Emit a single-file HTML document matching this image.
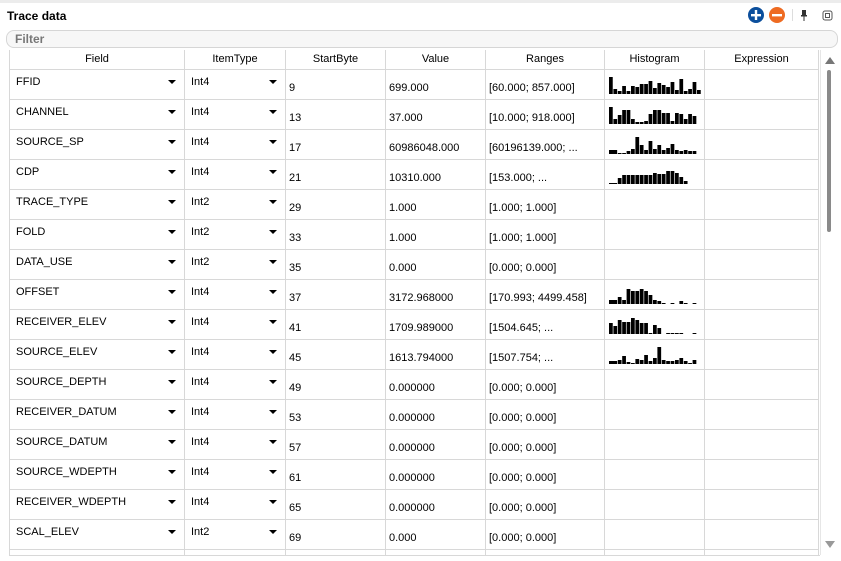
<!DOCTYPE html>
<html><head><meta charset="utf-8">
<style>
*{box-sizing:border-box;margin:0;padding:0}
body{width:841px;height:561px;background:#fff;font-family:"Liberation Sans",sans-serif;font-size:11px;color:#000;position:relative;overflow:hidden}
.top{position:absolute;left:0;top:0;width:841px;height:3px;background:#ececec}
.title{position:absolute;left:7px;top:9px;font-weight:bold;font-size:12px}
.filter{position:absolute;left:6px;top:30px;width:832px;height:18px;border:1px solid #d6d6d6;border-radius:8px;background:#f7f7f7;color:#777;font-weight:bold;font-size:12px;padding-left:8px;line-height:17px}
.wrap{position:absolute;left:9px;top:50px;width:811px;height:506px;overflow:hidden;border-bottom:1px solid #d8d8d8}
table{border-collapse:collapse;table-layout:fixed}
td,th{border:1px solid #d8d8d8;height:30px;padding:0;vertical-align:top;position:relative;white-space:nowrap;overflow:hidden}
th{height:19px;font-weight:normal;text-align:center;vertical-align:middle;border-top:none;font-size:11px}
td span{position:absolute;left:6px;top:10px}
td.f span{top:6px}
td.v span{left:3px;top:12px}
.ar{position:absolute;right:8px;top:10px;width:0;height:0;border-left:4px solid transparent;border-right:4px solid transparent;border-top:4px solid #000}
svg.h{position:absolute;left:4px;top:4px}
.sb{position:absolute;left:820px;top:50px;width:18px;height:505px;background:#fff;border-left:1px solid #e6e6e6}
.thumb{position:absolute;left:827px;top:70px;width:4px;height:162px;background:#8a8a8a;border-radius:2px}
</style></head><body>
<div class="top"></div>
<div class="title">Trace data</div>
<svg style="position:absolute;left:745px;top:5px" width="96" height="20">
<circle cx="11" cy="10" r="8" fill="#0c4f9c"/><rect x="6" y="9" width="10" height="2.4" fill="#fff"/><rect x="9.8" y="5" width="2.4" height="10" fill="#fff"/>
<circle cx="32" cy="10" r="8" fill="#ee6b22"/><rect x="27" y="9" width="10" height="2.4" fill="#fff"/>
<rect x="47" y="4" width="1" height="12" fill="#ddd"/>
<rect x="57" y="5" width="4" height="6" fill="#333"/><rect x="56" y="10" width="6" height="1.5" fill="#333"/><rect x="58.5" y="11" width="1" height="5" fill="#333"/>
<rect x="78" y="6" width="9" height="9" rx="2" fill="none" stroke="#555"/><rect x="80.5" y="8.5" width="4" height="4" fill="none" stroke="#555"/>
</svg>
<div class="filter">Filter</div>
<div class="sb"><svg width="18" height="505"><path d="M4 14 L9 7 L14 14Z" fill="#777"/><path d="M4 491 L9 498 L14 491Z" fill="#999"/></svg></div>
<div class="thumb"></div>
<div class="wrap">
<table>
<colgroup><col style="width:175px"><col style="width:101px"><col style="width:100px"><col style="width:100px"><col style="width:119px"><col style="width:100px"><col style="width:114px"></colgroup>
<tr><th>Field</th><th>ItemType</th><th>StartByte</th><th>Value</th><th>Ranges</th><th>Histogram</th><th>Expression</th></tr>
<tr><td class="f"><span>FFID</span><i class="ar"></i></td><td class="f"><span>Int4</span><i class="ar"></i></td><td class="v"><span>9</span></td><td class="v"><span>699.000</span></td><td class="v"><span>[60.000; 857.000]</span></td><td><svg class="h" width="92" height="20"><g fill="#000" transform="translate(0,20) scale(1.1,-1)"><rect x="0" width="3.4" height="17"/><rect x="4" width="3.4" height="5"/><rect x="8" width="3.4" height="3"/><rect x="12" width="3.4" height="8"/><rect x="16" width="3.4" height="3"/><rect x="20" width="3.4" height="8"/><rect x="24" width="3.4" height="7"/><rect x="28" width="3.4" height="10"/><rect x="32" width="3.4" height="10"/><rect x="36" width="3.4" height="13"/><rect x="40" width="3.4" height="6"/><rect x="44" width="3.4" height="11"/><rect x="48" width="3.4" height="9"/><rect x="52" width="3.4" height="7"/><rect x="56" width="3.4" height="12"/><rect x="60" width="3.4" height="4"/><rect x="64" width="3.4" height="15"/><rect x="68" width="3.4" height="3"/><rect x="72" width="3.4" height="5"/><rect x="76" width="3.4" height="12"/><rect x="80" width="3.4" height="4"/></g></svg></td><td></td></tr>
<tr><td class="f"><span>CHANNEL</span><i class="ar"></i></td><td class="f"><span>Int4</span><i class="ar"></i></td><td class="v"><span>13</span></td><td class="v"><span>37.000</span></td><td class="v"><span>[10.000; 918.000]</span></td><td><svg class="h" width="92" height="20"><g fill="#000" transform="translate(0,20) scale(1.1,-1)"><rect x="0" width="3.4" height="17"/><rect x="4" width="3.4" height="5"/><rect x="8" width="3.4" height="9"/><rect x="12" width="3.4" height="14"/><rect x="16" width="3.4" height="14"/><rect x="20" width="3.4" height="5"/><rect x="24" width="3.4" height="2"/><rect x="28" width="3.4" height="2"/><rect x="32" width="3.4" height="3"/><rect x="36" width="3.4" height="10"/><rect x="40" width="3.4" height="14"/><rect x="44" width="3.4" height="14"/><rect x="48" width="3.4" height="11"/><rect x="52" width="3.4" height="11"/><rect x="56" width="3.4" height="3"/><rect x="60" width="3.4" height="11"/><rect x="64" width="3.4" height="10"/><rect x="68" width="3.4" height="5"/><rect x="72" width="3.4" height="10"/><rect x="76" width="3.4" height="8"/></g></svg></td><td></td></tr>
<tr><td class="f"><span>SOURCE_SP</span><i class="ar"></i></td><td class="f"><span>Int4</span><i class="ar"></i></td><td class="v"><span>17</span></td><td class="v"><span>60986048.000</span></td><td class="v"><span>[60196139.000; ...</span></td><td><svg class="h" width="92" height="20"><g fill="#000" transform="translate(0,20) scale(1.1,-1)"><rect x="0" width="7.4" height="4"/><rect x="8" width="3.4" height="1"/><rect x="12" width="3.4" height="1"/><rect x="16" width="3.4" height="3"/><rect x="20" width="3.4" height="5"/><rect x="24" width="3.4" height="17"/><rect x="28" width="3.4" height="9"/><rect x="32" width="3.4" height="4"/><rect x="36" width="3.4" height="13"/><rect x="40" width="3.4" height="5"/><rect x="44" width="3.4" height="9"/><rect x="48" width="3.4" height="4"/><rect x="52" width="3.4" height="6"/><rect x="56" width="3.4" height="10"/><rect x="60" width="3.4" height="4"/><rect x="64" width="3.4" height="3"/><rect x="68" width="3.4" height="4"/><rect x="72" width="3.4" height="3"/><rect x="76" width="3.4" height="3"/></g></svg></td><td></td></tr>
<tr><td class="f"><span>CDP</span><i class="ar"></i></td><td class="f"><span>Int4</span><i class="ar"></i></td><td class="v"><span>21</span></td><td class="v"><span>10310.000</span></td><td class="v"><span>[153.000; ...</span></td><td><svg class="h" width="92" height="20"><g fill="#000" transform="translate(0,20) scale(1.1,-1)"><rect x="0" width="7.4" height="1"/><rect x="8" width="3.4" height="6"/><rect x="12" width="3.4" height="9"/><rect x="16" width="3.4" height="9"/><rect x="20" width="3.4" height="9"/><rect x="24" width="3.4" height="9"/><rect x="28" width="3.4" height="9"/><rect x="32" width="3.4" height="9"/><rect x="36" width="3.4" height="9"/><rect x="40" width="3.4" height="11"/><rect x="44" width="3.4" height="10"/><rect x="48" width="3.4" height="10"/><rect x="52" width="3.4" height="13"/><rect x="56" width="3.4" height="13"/><rect x="60" width="3.4" height="11"/><rect x="64" width="3.4" height="7"/><rect x="68" width="3.4" height="3"/></g></svg></td><td></td></tr>
<tr><td class="f"><span>TRACE_TYPE</span><i class="ar"></i></td><td class="f"><span>Int2</span><i class="ar"></i></td><td class="v"><span>29</span></td><td class="v"><span>1.000</span></td><td class="v"><span>[1.000; 1.000]</span></td><td></td><td></td></tr>
<tr><td class="f"><span>FOLD</span><i class="ar"></i></td><td class="f"><span>Int2</span><i class="ar"></i></td><td class="v"><span>33</span></td><td class="v"><span>1.000</span></td><td class="v"><span>[1.000; 1.000]</span></td><td></td><td></td></tr>
<tr><td class="f"><span>DATA_USE</span><i class="ar"></i></td><td class="f"><span>Int2</span><i class="ar"></i></td><td class="v"><span>35</span></td><td class="v"><span>0.000</span></td><td class="v"><span>[0.000; 0.000]</span></td><td></td><td></td></tr>
<tr><td class="f"><span>OFFSET</span><i class="ar"></i></td><td class="f"><span>Int4</span><i class="ar"></i></td><td class="v"><span>37</span></td><td class="v"><span>3172.968000</span></td><td class="v"><span>[170.993; 4499.458]</span></td><td><svg class="h" width="92" height="20"><g fill="#000" transform="translate(0,20) scale(1.1,-1)"><rect x="0" width="7.4" height="4"/><rect x="8" width="3.4" height="7"/><rect x="12" width="3.4" height="4"/><rect x="16" width="3.4" height="15"/><rect x="20" width="3.4" height="13"/><rect x="24" width="3.4" height="13"/><rect x="28" width="3.4" height="15"/><rect x="32" width="3.4" height="13"/><rect x="36" width="3.4" height="9"/><rect x="40" width="3.4" height="4"/><rect x="44" width="3.4" height="3"/><rect x="48" width="3.4" height="1"/><rect x="56" width="3.4" height="1"/><rect x="64" width="3.4" height="3"/><rect x="68" width="3.4" height="1"/><rect x="76" width="3.4" height="1"/></g></svg></td><td></td></tr>
<tr><td class="f"><span>RECEIVER_ELEV</span><i class="ar"></i></td><td class="f"><span>Int4</span><i class="ar"></i></td><td class="v"><span>41</span></td><td class="v"><span>1709.989000</span></td><td class="v"><span>[1504.645; ...</span></td><td><svg class="h" width="92" height="20"><g fill="#000" transform="translate(0,20) scale(1.1,-1)"><rect x="0" width="3.4" height="11"/><rect x="4" width="3.4" height="8"/><rect x="8" width="3.4" height="14"/><rect x="12" width="3.4" height="12"/><rect x="16" width="3.4" height="12"/><rect x="20" width="3.4" height="16"/><rect x="24" width="3.4" height="14"/><rect x="28" width="3.4" height="11"/><rect x="32" width="3.4" height="11"/><rect x="36" width="3.4" height="1"/><rect x="40" width="3.4" height="9"/><rect x="44" width="3.4" height="6"/><rect x="52" width="3.4" height="1"/><rect x="56" width="3.4" height="1"/><rect x="60" width="3.4" height="1"/><rect x="64" width="3.4" height="1"/><rect x="76" width="3.4" height="1"/></g></svg></td><td></td></tr>
<tr><td class="f"><span>SOURCE_ELEV</span><i class="ar"></i></td><td class="f"><span>Int4</span><i class="ar"></i></td><td class="v"><span>45</span></td><td class="v"><span>1613.794000</span></td><td class="v"><span>[1507.754; ...</span></td><td><svg class="h" width="92" height="20"><g fill="#000" transform="translate(0,20) scale(1.1,-1)"><rect x="0" width="7.4" height="3"/><rect x="8" width="3.4" height="4"/><rect x="12" width="3.4" height="8"/><rect x="16" width="3.4" height="2"/><rect x="20" width="3.4" height="1"/><rect x="24" width="3.4" height="5"/><rect x="28" width="3.4" height="4"/><rect x="32" width="3.4" height="9"/><rect x="36" width="3.4" height="3"/><rect x="40" width="3.4" height="6"/><rect x="44" width="3.4" height="17"/><rect x="48" width="3.4" height="4"/><rect x="52" width="3.4" height="3"/><rect x="56" width="3.4" height="3"/><rect x="60" width="3.4" height="4"/><rect x="64" width="3.4" height="6"/><rect x="68" width="3.4" height="3"/><rect x="72" width="3.4" height="1"/><rect x="76" width="3.4" height="4"/></g></svg></td><td></td></tr>
<tr><td class="f"><span>SOURCE_DEPTH</span><i class="ar"></i></td><td class="f"><span>Int4</span><i class="ar"></i></td><td class="v"><span>49</span></td><td class="v"><span>0.000000</span></td><td class="v"><span>[0.000; 0.000]</span></td><td></td><td></td></tr>
<tr><td class="f"><span>RECEIVER_DATUM</span><i class="ar"></i></td><td class="f"><span>Int4</span><i class="ar"></i></td><td class="v"><span>53</span></td><td class="v"><span>0.000000</span></td><td class="v"><span>[0.000; 0.000]</span></td><td></td><td></td></tr>
<tr><td class="f"><span>SOURCE_DATUM</span><i class="ar"></i></td><td class="f"><span>Int4</span><i class="ar"></i></td><td class="v"><span>57</span></td><td class="v"><span>0.000000</span></td><td class="v"><span>[0.000; 0.000]</span></td><td></td><td></td></tr>
<tr><td class="f"><span>SOURCE_WDEPTH</span><i class="ar"></i></td><td class="f"><span>Int4</span><i class="ar"></i></td><td class="v"><span>61</span></td><td class="v"><span>0.000000</span></td><td class="v"><span>[0.000; 0.000]</span></td><td></td><td></td></tr>
<tr><td class="f"><span>RECEIVER_WDEPTH</span><i class="ar"></i></td><td class="f"><span>Int4</span><i class="ar"></i></td><td class="v"><span>65</span></td><td class="v"><span>0.000000</span></td><td class="v"><span>[0.000; 0.000]</span></td><td></td><td></td></tr>
<tr><td class="f"><span>SCAL_ELEV</span><i class="ar"></i></td><td class="f"><span>Int2</span><i class="ar"></i></td><td class="v"><span>69</span></td><td class="v"><span>0.000</span></td><td class="v"><span>[0.000; 0.000]</span></td><td></td><td></td></tr>
<tr><td></td><td></td><td></td><td></td><td></td><td></td><td></td></tr>
</table>
</div>
</body></html>
